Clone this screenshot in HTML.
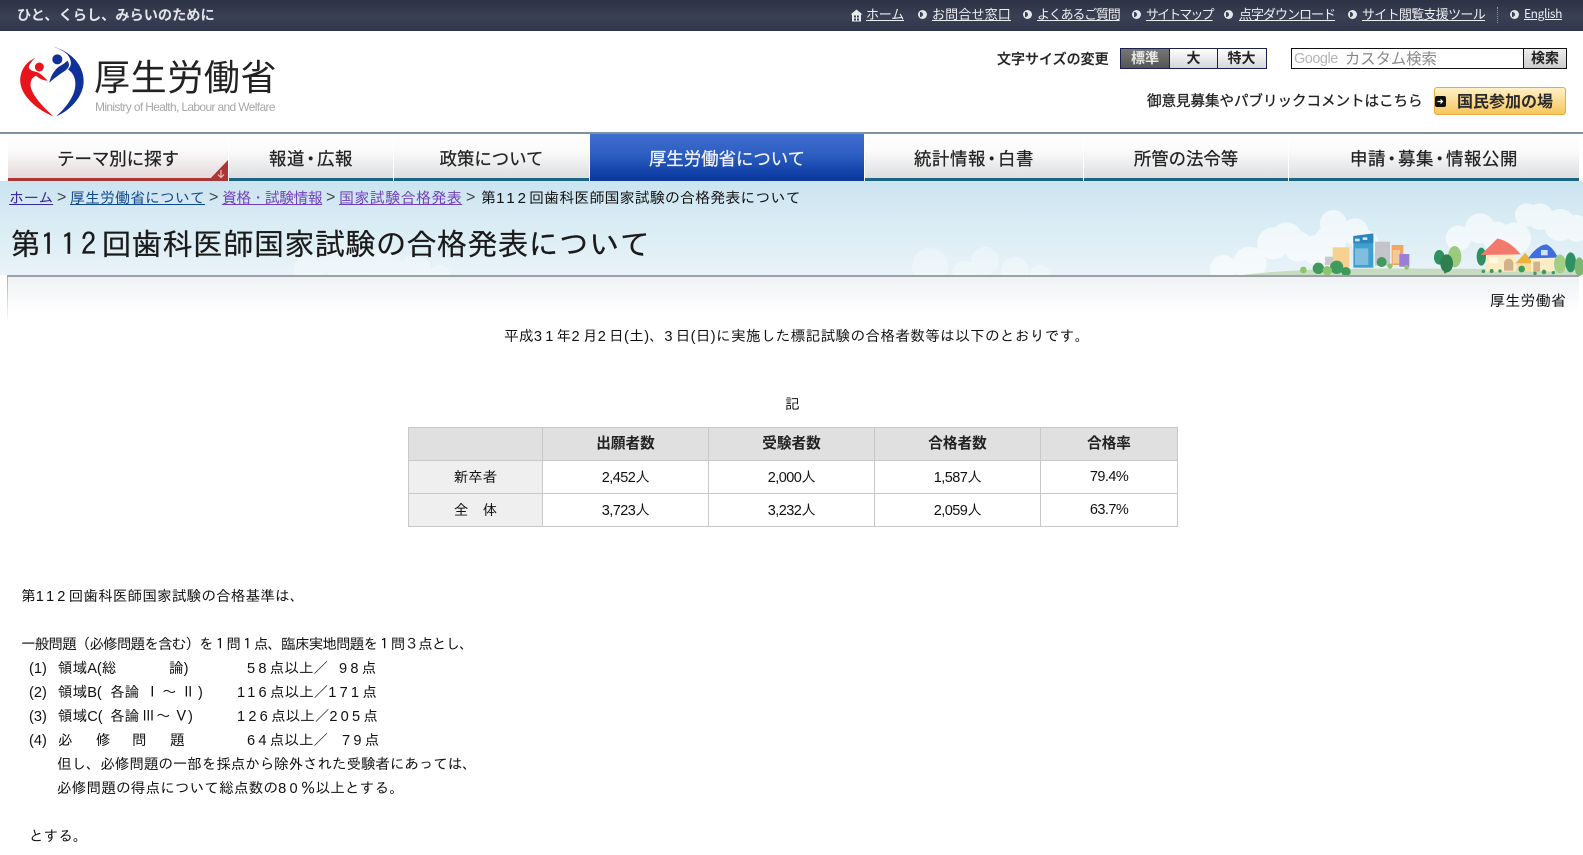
<!DOCTYPE html>
<html lang="ja"><head><meta charset="utf-8"><title>第112回歯科医師国家試験の合格発表について</title>
<style>
html,body{margin:0;padding:0;background:#fff}
body{width:1583px;height:855px;overflow:hidden;position:relative;font-family:"Liberation Sans","IPAGothic","Noto Sans CJK JP",sans-serif;color:#111}
.a{position:absolute;white-space:pre}
.n{font-family:"Noto Sans CJK JP",sans-serif}
#top{position:absolute;left:0;top:0;width:1583px;height:31px;background:linear-gradient(#2c3244,#3a4154 55%,#30364a)}
#top a{position:absolute;top:6px;font:13px/16px "Noto Sans CJK JP",sans-serif;color:#eceef2;text-decoration:underline;white-space:pre}
#top i{position:absolute;top:10px;width:9px;height:9px;border-radius:50%;background:#e4e6ea}
#top i:after{content:"";position:absolute;left:2px;top:2px;width:3px;height:5px;background:#3a4154;border-radius:0 3px 3px 0}
#hl{position:absolute;left:0;top:132px;width:1583px;height:2px;background:#7f909e}
.tab{position:absolute;top:134px;height:44px;background:linear-gradient(#fff,#fafafa 40%,#dcdedf);border-bottom:3px solid #1c6484;text-align:center;font:17.4px/50px "Noto Sans CJK JP",sans-serif;color:#222;-webkit-text-stroke:.25px #222;box-sizing:content-box}
.tab b{font-weight:400;margin:0 -3px}
.tab.w{letter-spacing:.6px}
#sky{position:absolute;left:0;top:181px;width:1583px;height:94px;background:linear-gradient(#cbe4f0,#d9ecf4 45%,#e9f3f8)}
#bc a{position:absolute;top:190px;font-size:15px;line-height:18px;white-space:pre;text-decoration:underline}
#bc span.s{position:absolute;top:189px;font-size:16px;line-height:18px;color:#444}
#panel{position:absolute;left:7px;top:275px;width:1572px;height:48px;border-top:2px solid #9aa2a8;background:linear-gradient(#eff2f4,#fff 75%)}
#panel:before{content:"";position:absolute;left:0;top:0;width:1px;height:46px;background:linear-gradient(#a9b0b5,#fff)}
table{position:absolute;left:408px;top:427px;width:769px;height:100px;border-collapse:collapse;table-layout:fixed;font-size:14.5px}
td,th{border:1px solid #c8c8c8;padding:0;text-align:center;font-weight:400;height:32px}
th.h{background:#e0e0e0;font-family:"Noto Sans CJK JP",sans-serif;font-weight:700;font-size:14.6px;line-height:14px;padding-bottom:3px;height:29px;color:#222}
th.s{background:#efefef}
td{letter-spacing:-.55px}
.l{font-size:14.6px;line-height:18px;height:18px}
.d{letter-spacing:3.2px}
</style></head><body>

<div id="top">
<span class="a n" style="left:17px;top:5px;font-size:14.2px;line-height:20px;font-weight:700;color:#e3e5ea">ひと、くらし、みらいのために</span>
<svg class="a" style="left:850px;top:9px" width="13" height="13" viewBox="0 0 13 13"><path d="M6.5 0.5L12.5 5.5H11V12.5H2V5.5H0.5Z" fill="#e8eaee"/><path d="M4 6.5h2v2h-2zM7 6.5h2v2h-2zM4 9.5h2v2h-2zM7 9.5h2v2h-2z" fill="#3a4154"/></svg>
<a style="left:866px;letter-spacing:-.2px">ホーム</a>
<i style="left:918px"></i><a style="left:932px;letter-spacing:.15px">お問合せ窓口</a>
<i style="left:1023px"></i><a style="left:1037px;letter-spacing:-1.2px">よくあるご質問</a>
<i style="left:1132px"></i><a style="left:1146px;letter-spacing:-1.9px">サイトマップ</a>
<i style="left:1224px"></i><a style="left:1239px;letter-spacing:-1px">点字ダウンロード</a>
<i style="left:1348px"></i><a style="left:1362px;letter-spacing:-.7px">サイト閲覧支援ツール</a>
<span class="a" style="left:1497px;top:7px;width:1px;height:16px;border-left:1px dotted #99a"></span>
<i style="left:1510px"></i><a style="left:1524px;font-size:12px;letter-spacing:-.4px">English</a>
</div>

<!-- logo -->
<svg class="a" style="left:10px;top:40px" width="90" height="85" viewBox="0 0 270 255">
<path d="M77 53C48 66 28 92 31 128C35 170 85 212 130 229C104 205 68 170 62 140C60 122 67 112 78 107C90 118 102 122 113 122C104 113 92 100 80 96C70 93 60 92 56 82C59 72 66 62 77 53Z" fill="#e8141c"/>
<circle cx="88" cy="81" r="13.5" fill="#e8141c"/>
<path d="M125 19C175 30 222 70 221 125C220 170 180 212 139 229C165 205 195 170 196 135C197 112 188 98 174 88C186 76 186 62 172 43C160 32 144 24 125 19Z" fill="#10309a"/>
<path d="M172 62C180 72 178 82 168 90C150 103 135 112 118 128C122 110 130 95 143 83C152 76 163 72 172 62Z" fill="#10309a"/>
<circle cx="142" cy="58" r="15" fill="#10309a"/>
</svg>
<span class="a n" style="left:94px;top:50px;font-size:36px;line-height:50px;letter-spacing:.6px;color:#222;font-weight:400">厚生労働省</span>
<span class="a" style="left:95px;top:100px;font-size:12px;line-height:14px;letter-spacing:-.65px;color:#a6a8aa">Ministry of Health, Labour and Welfare</span>

<!-- header right -->
<span class="a n" style="left:997px;top:50px;font-size:14px;line-height:18px;font-weight:500;-webkit-text-stroke:.2px #222;color:#222">文字サイズの変更</span>
<div class="a" style="left:1120px;top:48px;width:145px;height:19px;border:1px solid #1b1f4d;background:linear-gradient(#fff,#d4d6da)"></div>
<div class="a n" style="left:1121px;top:49px;width:48px;height:19px;background:linear-gradient(#777,#555);color:#e8e8e8;text-align:center;font-size:14px;line-height:19px;font-weight:700">標準</div>
<div class="a n" style="left:1169px;top:49px;width:48px;height:19px;border-left:1px solid #1b1f4d;text-align:center;font-size:14px;line-height:19px;font-weight:700;color:#222;box-sizing:border-box">大</div>
<div class="a n" style="left:1217px;top:49px;width:48px;height:19px;border-left:1px solid #1b1f4d;text-align:center;font-size:14px;line-height:19px;font-weight:700;color:#222;box-sizing:border-box">特大</div>

<div class="a" style="left:1291px;top:48px;width:274px;height:19px;border:1px solid #111;background:#fff"></div>
<span class="a" style="left:1294px;top:50px;font-size:14.5px;line-height:18px;letter-spacing:-.5px;color:#b4b4b4">Google</span>
<span class="a n" style="left:1345px;top:48px;font-size:15.3px;line-height:20px;color:#888">カスタム検索</span>
<div class="a n" style="left:1523px;top:49px;width:43px;height:19px;border-left:1px solid #111;background:linear-gradient(#eee,#ccc);text-align:center;font-size:14px;line-height:19px;font-weight:700;color:#222;box-sizing:border-box">検索</div>

<span class="a n" style="left:1147px;top:91px;font-size:14.5px;line-height:20px;-webkit-text-stroke:.3px #222;color:#222">御意見募集やパブリックコメントはこちら</span>
<div class="a" style="left:1434px;top:87px;width:130px;height:26px;border:1px solid #e4ac42;border-radius:3px;background:linear-gradient(#fff0c6,#fbd98c 55%,#f6c65a)"></div>
<div class="a" style="left:1435px;top:96px;width:11px;height:11px;background:#111;border-radius:2px"></div>
<svg class="a" style="left:1436px;top:97px" width="9" height="9" viewBox="0 0 9 9"><path d="M1.5 4.5H6M4.5 2.5L6.5 4.5L4.5 6.5" fill="none" stroke="#fff" stroke-width="1.2"/></svg>
<span class="a n" style="left:1457px;top:89px;font-size:16px;line-height:22px;font-weight:700;color:#2a2a2a">国民参加の場</span>

<div id="hl"></div>
<!-- nav -->
<div class="tab" style="left:8px;width:220px;border-bottom-color:#a93737;background:linear-gradient(#fff,#fbfafa 40%,#e4d9d9)">テーマ別に探す</div>
<svg class="a" style="left:208px;top:160px" width="20" height="21" viewBox="0 0 20 21"><path d="M0 21L20 0V21Z" fill="#a93737"/><path d="M13 10V17M10 14.5L13 17.5L16 14.5" fill="none" stroke="#eebfbf" stroke-width="1.2"/></svg>
<div class="tab w" style="left:229px;width:164px">報道<b>・</b>広報</div>
<div class="tab" style="left:394px;width:195px">政策について</div>
<div class="tab" style="left:590px;width:274px;background:linear-gradient(#3f6fce,#2b5cc0 50%,#0b3aa0);border-bottom-color:#0b3aa0;color:#f2f4fa;-webkit-text-stroke:.25px #f2f4fa">厚生労働省について</div>
<div class="tab w" style="left:865px;width:218px">統計情報<b>・</b>白書</div>
<div class="tab" style="left:1084px;width:204px">所管の法令等</div>
<div class="tab w" style="left:1289px;width:290px">申請<b>・</b>募集<b>・</b>情報公開</div>

<!-- sky and scene -->
<div id="sky"></div>
<svg class="a" style="left:0;top:181px" width="1583" height="94" viewBox="0 0 1583 94">
<g fill="#fff" opacity=".32">
<circle cx="310" cy="88" r="16"/><circle cx="345" cy="80" r="22"/><circle cx="382" cy="86" r="20"/><circle cx="415" cy="90" r="16"/><circle cx="440" cy="94" r="10"/>
<circle cx="930" cy="85" r="18"/><circle cx="965" cy="92" r="12"/><circle cx="985" cy="80" r="14"/><circle cx="1015" cy="90" r="14"/><circle cx="1040" cy="94" r="10"/>
</g>
</svg>
<svg class="a" style="left:1240px;top:200px;overflow:visible" width="343" height="90" viewBox="0 0 1029 270">
<g fill="#fff" opacity=".62">
<circle cx="-50" cy="205" r="40"/><circle cx="30" cy="190" r="50"/><circle cx="100" cy="130" r="48"/><circle cx="140" cy="115" r="48"/><circle cx="175" cy="140" r="45"/><circle cx="230" cy="150" r="45"/><circle cx="280" cy="70" r="40"/><circle cx="270" cy="125" r="48"/><circle cx="345" cy="95" r="40"/><circle cx="375" cy="130" r="40"/>
<circle cx="655" cy="115" r="38"/><circle cx="720" cy="85" r="45"/><circle cx="770" cy="110" r="45"/><circle cx="825" cy="115" r="48"/><circle cx="860" cy="45" r="35"/><circle cx="900" cy="50" r="40"/><circle cx="960" cy="75" r="48"/><circle cx="1010" cy="85" r="40"/>
</g>
<path d="M0 226C120 210 300 204 560 206L1029 208V226Z" fill="#c6dbc0"/>
<rect x="340" y="108" width="60" height="95" fill="#3f9fd0"/><path d="M340 108L400 100V130H340Z" fill="#2d86bb"/><rect x="345" y="116" width="14" height="8" fill="#cfe6ee"/><rect x="368" y="112" width="14" height="8" fill="#cfe6ee"/><rect x="345" y="145" width="40" height="50" fill="#a9d6ea" opacity=".6"/>
<rect x="278" y="142" width="50" height="60" fill="#f7d18f"/><rect x="255" y="170" width="24" height="25" fill="#c9c9cc"/>
<rect x="405" y="125" width="45" height="72" fill="#c4c5cb"/><rect x="455" y="135" width="35" height="60" fill="#eea660"/><rect x="458" y="150" width="22" height="40" fill="#f3c89a"/><rect x="478" y="162" width="30" height="38" fill="#9a7dd6"/>
<g fill="#3f9a5c"><circle cx="235" cy="205" r="17"/><circle cx="290" cy="202" r="20"/><circle cx="318" cy="215" r="14"/><circle cx="425" cy="186" r="15"/></g>
<g fill="#8dc56e"><circle cx="190" cy="210" r="10"/><circle cx="262" cy="212" r="14"/><circle cx="450" cy="198" r="8"/><circle cx="500" cy="202" r="7"/></g>
<rect x="612" y="190" width="7" height="30" fill="#7a6a50"/><ellipse cx="598" cy="172" rx="16" ry="22" fill="#2f9162"/><ellipse cx="644" cy="170" rx="20" ry="32" fill="#9bc97e"/><ellipse cx="620" cy="190" rx="19" ry="27" fill="#2e8050"/>
<ellipse cx="724" cy="170" rx="14" ry="27" fill="#2f8f62"/>
<rect x="738" y="160" width="90" height="55" fill="#faecc4"/><path d="M722 165L772 116C800 120 825 142 842 163Z" fill="#f27a6c"/><rect x="748" y="172" width="26" height="18" fill="#fff8e0"/><path d="M792 212V188C796 172 816 172 820 188V212Z" fill="#d3b18d"/>
<path d="M826 190L856 158L880 190Z" fill="#efb23f"/><rect x="830" y="190" width="45" height="25" fill="#f5dd9b"/>
<rect x="873" y="175" width="70" height="40" fill="#faecc4"/><path d="M865 175C880 150 905 132 920 133C938 142 948 160 953 173Z" fill="#3e6fdc"/><rect x="903" y="150" width="20" height="16" fill="#cfe2f6"/><rect x="880" y="185" width="20" height="30" fill="#d3b18d"/>
<ellipse cx="960" cy="192" rx="18" ry="28" fill="#a3cf85"/><ellipse cx="992" cy="187" rx="16" ry="30" fill="#2f9162"/><ellipse cx="1018" cy="200" rx="14" ry="28" fill="#7ab872"/>
<g fill="#3f9a5c"><circle cx="730" cy="214" r="5"/><circle cx="755" cy="213" r="6"/><circle cx="780" cy="213" r="5"/><circle cx="845" cy="207" r="10"/><circle cx="885" cy="220" r="5"/><circle cx="912" cy="216" r="7"/><circle cx="940" cy="218" r="5"/></g>
</svg>

<!-- breadcrumb -->
<div id="bc">
<a style="left:9px;color:#3b2a9c;letter-spacing:-.3px">ホーム</a>
<span class="s" style="left:57px">&gt;</span>
<a style="left:70px;color:#12478e">厚生労働省について</a>
<span class="s" style="left:209px">&gt;</span>
<a style="left:222px;color:#7040b8;letter-spacing:-.7px">資格・試験情報</a>
<span class="s" style="left:326px">&gt;</span>
<a style="left:339px;color:#7040b8;letter-spacing:.4px">国家試験合格発表</a>
<span class="s" style="left:466px">&gt;</span>
<span class="a" style="left:481px;top:190px;font-size:15px;line-height:18px;letter-spacing:.1px">第<span style="letter-spacing:3px">112</span>回歯科医師国家試験の合格発表について</span>
</div>
<h1 class="a" style="margin:0;left:10px;top:226px;font-family:'IPAGothic','Noto Sans CJK JP',sans-serif;font-weight:400;font-size:30.5px;line-height:36px;color:#1a1a1a;-webkit-text-stroke:.2px #1a1a1a">第<span style="letter-spacing:5px">112</span>回歯科医師国家試験の合格発表について</h1>

<div id="panel"></div>
<span class="a" style="left:1490px;top:293px;font-size:15.2px;line-height:18px">厚生労働省</span>
<p class="a l" style="margin:0;left:504px;top:328px;letter-spacing:.35px">平成<span class="d">31</span>年<span class="d">2</span>月<span class="d">2</span>日(土)、<span class="d">3</span>日(日)に実施した標記試験の合格者数等は以下のとおりです。</p>
<p class="a l" style="margin:0;left:785px;top:396px">記</p>

<table>
<colgroup><col style="width:134px"><col style="width:166px"><col style="width:166px"><col style="width:166px"><col style="width:137px"></colgroup>
<tr><th class="h"></th><th class="h">出願者数</th><th class="h">受験者数</th><th class="h">合格者数</th><th class="h">合格率</th></tr>
<tr><th class="s">新卒者</th><td>2,452人</td><td>2,000人</td><td>1,587人</td><td>79.4%</td></tr>
<tr><th class="s">全　体</th><td>3,723人</td><td>3,232人</td><td>2,059人</td><td>63.7%</td></tr>
</table>

<div class="a l" style="left:21px;top:588px;letter-spacing:.15px">第<span class="d">112</span>回歯科医師国家試験の合格基準は、</div>
<div class="a l" style="left:21px;top:636px;letter-spacing:-.9px">一般問題（必修問題を含む）を１問１点、臨床実地問題を１問３点とし、</div>

<div class="a l" style="left:29px;top:660px">(1)</div><div class="a l" style="left:58px;top:660px">領域A(総</div><div class="a l" style="left:169px;top:660px">論)</div><div class="a l" style="left:247px;top:660px"><span class="d">58</span>点以上／</div><div class="a l" style="left:339px;top:660px"><span class="d">98</span>点</div>
<div class="a l" style="left:29px;top:684px">(2)</div><div class="a l" style="left:58px;top:684px">領域B(</div><div class="a l" style="left:110px;top:684px">各論</div><div class="a l" style="left:145px;top:684px">Ⅰ</div><div class="a l" style="left:162px;top:684px">～</div><div class="a l" style="left:181px;top:684px">Ⅱ</div><div class="a l" style="left:198px;top:684px">)</div><div class="a l" style="left:237px;top:684px"><span class="d">116</span>点以上／<span class="d">171</span>点</div>
<div class="a l" style="left:29px;top:708px">(3)</div><div class="a l" style="left:58px;top:708px">領域C(</div><div class="a l" style="left:110px;top:708px">各論</div><div class="a l" style="left:141px;top:708px">Ⅲ</div><div class="a l" style="left:156px;top:708px">～</div><div class="a l" style="left:174px;top:708px">Ⅴ</div><div class="a l" style="left:188px;top:708px">)</div><div class="a l" style="left:237px;top:708px"><span class="d">126</span>点以上／<span class="d">205</span>点</div>
<div class="a l" style="left:29px;top:732px">(4)</div><div class="a l" style="left:58px;top:732px">必</div><div class="a l" style="left:96px;top:732px">修</div><div class="a l" style="left:132px;top:732px">問</div><div class="a l" style="left:170px;top:732px">題</div><div class="a l" style="left:247px;top:732px"><span class="d">64</span>点以上／</div><div class="a l" style="left:342px;top:732px"><span class="d">79</span>点</div>
<div class="a l" style="left:57px;top:756px;letter-spacing:-.12px">但し、必修問題の一部を採点から除外された受験者にあっては、</div>
<div class="a l" style="left:57px;top:780px;letter-spacing:.15px">必修問題の得点について総点数の<span class="d">80</span>％以上とする。</div>
<div class="a l" style="left:29px;top:828px">とする。</div>
</body></html>
